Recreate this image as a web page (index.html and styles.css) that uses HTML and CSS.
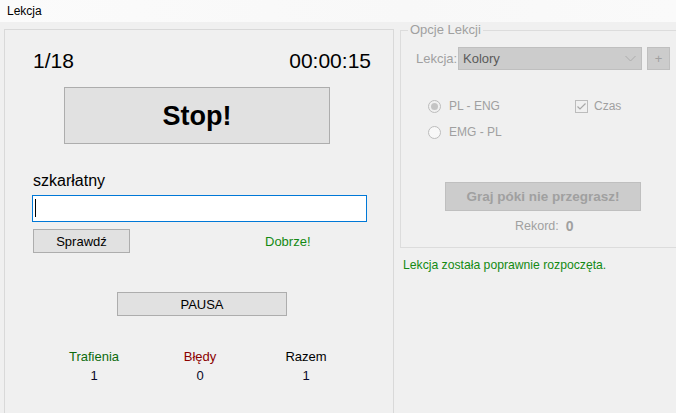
FILE: index.html
```html
<!DOCTYPE html>
<html lang="pl">
<head>
<meta charset="utf-8">
<title>Lekcja</title>
<link rel="stylesheet" href="styles.css">
</head>
<body>
<div class="titlebar">Lekcja</div>
<div class="main">
  <section class="lesson">
    <div class="counter-row"><span>1/18</span><span>00:00:15</span></div>
    <button class="btn stop">Stop!</button>
    <div class="word">szkarłatny</div>
    <div class="answer"><span class="caret"></span></div>
    <div class="check-row">
      <button class="btn check">Sprawdź</button>
      <span class="feedback">Dobrze!</span>
    </div>
    <button class="btn pause">PAUSA</button>
    <div class="stats">
      <span class="label hits">Trafienia</span>
      <span class="label misses">Błędy</span>
      <span class="label total">Razem</span>
      <span class="num">1</span>
      <span class="num">0</span>
      <span class="num">1</span>
    </div>
  </section>
  <aside class="side">
    <fieldset class="options">
      <legend>Opcje Lekcji</legend>
      <div class="lesson-row">
        <span class="field-label">Lekcja:</span>
        <div class="combo">
          <span>Kolory</span>
          <svg class="chevron" width="11" height="7" viewBox="0 0 11 7"><path d="M0.5 1 L5.5 6 L10.5 1" fill="none" stroke="#acacac" stroke-width="1"/></svg>
        </div>
        <div class="plus">+</div>
      </div>
      <div class="radio-row">
        <span class="radio-item">
          <svg width="13" height="13" viewBox="0 0 13 13"><circle cx="6.5" cy="6.5" r="6" fill="#f0f0f0" stroke="#bcbcbc"/><circle cx="6.5" cy="6.5" r="3.5" fill="#c4c4c4"/></svg>
          <span>PL - ENG</span>
        </span>
        <span class="check-item">
          <svg width="13" height="13" viewBox="0 0 13 13"><rect x="0.5" y="0.5" width="12" height="12" fill="#f0f0f0" stroke="#bcbcbc"/><path d="M2.5 6.5 L5 9 L10.5 3.5" fill="none" stroke="#a8a8a8" stroke-width="1.2"/></svg>
          <span>Czas</span>
        </span>
      </div>
      <div class="radio-row second">
        <span class="radio-item">
          <svg width="13" height="13" viewBox="0 0 13 13"><circle cx="6.5" cy="6.5" r="6" fill="#f8f8f8" stroke="#bcbcbc"/></svg>
          <span>EMG - PL</span>
        </span>
      </div>
      <button class="btn disabled play">Graj póki nie przegrasz!</button>
      <div class="record"><span>Rekord:</span><b>0</b></div>
    </fieldset>
    <p class="status">Lekcja została poprawnie rozpoczęta.</p>
  </aside>
</div>
</body>
</html>
```

FILE: styles.css
```css
html, body {
  margin: 0;
  padding: 0;
}
body {
  width: 676px;
  height: 413px;
  overflow: hidden;
  background: #f0f0f0;
  font-family: "Liberation Sans", Arial, sans-serif;
  font-size: 13px;
  color: #000;
}
.titlebar {
  height: 22px;
  box-sizing: border-box;
  padding: 4px 0 0 7px;
  font-size: 12px;
  line-height: 14px;
  background: linear-gradient(to right, #fbfbfb, #f8f8f8 60%, #fafafa);
}
.main {
  display: flex;
  align-items: flex-start;
}
.lesson {
  flex: none;
  margin: 7px 0 0 4px;
  width: 390px;
  height: 400px;
  box-sizing: border-box;
  border: 1px solid #d9d9d9;
  border-bottom: none;
  padding: 19px 22px 0 28px;
  display: flex;
  flex-direction: column;
  align-items: flex-start;
}
.counter-row {
  align-self: stretch;
  display: flex;
  justify-content: space-between;
  font-size: 21px;
  line-height: 24px;
}
.btn {
  font-family: "Liberation Sans", Arial, sans-serif;
  font-size: 13px;
  color: #000;
  background: #e1e1e1;
  border: 1px solid #adadad;
  padding: 0;
  margin: 0;
  box-sizing: border-box;
}
.stop {
  margin: 14px 0 0 31px;
  padding-top: 2px;
  width: 266px;
  height: 57px;
  font-size: 27px;
  font-weight: bold;
}
.word {
  margin-top: 28px;
  font-size: 16px;
  line-height: 18px;
}
.answer {
  margin: 5px 0 0 -1px;
  width: 335px;
  height: 27px;
  box-sizing: border-box;
  border: 1px solid #0078d7;
  background: #fff;
  padding: 3px 0 0 2px;
}
.caret {
  display: block;
  width: 1px;
  height: 18px;
  background: #000;
}
.check-row {
  margin-top: 7px;
  display: flex;
  align-items: center;
}
.check {
  width: 97px;
  height: 24px;
}
.feedback {
  margin-left: 135px;
  color: #138a13;
}
.pause {
  margin: 39px 0 0 84px;
  width: 170px;
  height: 24px;
}
.stats {
  margin: 33px 0 0 8px;
  display: grid;
  grid-template-columns: 106px 106px 106px;
  row-gap: 3px;
  text-align: center;
  line-height: 16px;
}
.hits { color: #0d6b0d; }
.misses { color: #8b0000; }
.total { color: #000; }
.num { color: #0a0a28; }

.side {
  margin-left: 6px;
  width: 300px;
  flex: none;
  font-size: 12.5px;
}
.options {
  margin: 0;
  padding: 0;
  width: 300px;
  height: 226px;
  box-sizing: border-box;
  border: 1px solid #dcdcdc;
  min-width: 0;
  color: #a0a0a0;
}
.options legend {
  margin-left: 7px;
  padding: 0 2px;
  font-size: 13px;
  line-height: 16px;
}
.lesson-row {
  margin: 9px 0 0 15px;
  display: flex;
  align-items: center;
  font-size: 13px;
}
.field-label {
  width: 42px;
}
.combo {
  width: 184px;
  height: 23px;
  box-sizing: border-box;
  background: #cccccc;
  border: 1px solid #bfbfbf;
  display: flex;
  align-items: center;
  justify-content: space-between;
  padding: 0 5px 0 4px;
  color: #5a5a5a;
}
.plus {
  margin-left: 5px;
  width: 23px;
  height: 23px;
  box-sizing: border-box;
  background: #cccccc;
  border: 1px solid #bfbfbf;
  display: flex;
  align-items: center;
  justify-content: center;
  color: #a0a0a0;
}
.radio-row {
  margin: 29px 0 0 27px;
  display: flex;
  align-items: center;
  height: 14px;
  font-size: 12px;
}
.radio-row.second {
  margin-top: 12px;
}
.radio-item, .check-item {
  display: flex;
  align-items: center;
}
.radio-item {
  width: 147px;
}
.radio-item svg {
  margin-right: 8px;
}
.check-item svg {
  margin-right: 6px;
}
.disabled {
  background: #cccccc;
  border-color: #bfbfbf;
  color: #a0a0a0;
}
.play {
  display: block;
  margin: 43px 0 0 44px;
  width: 196px;
  height: 29px;
  font-size: 13.5px;
  font-weight: bold;
}
.record {
  margin: 7px 0 0 114px;
  display: flex;
  gap: 7px;
  line-height: 16px;
  font-size: 12.5px;
}
.record b {
  font-size: 14px;
}
.status {
  margin: 9px 0 0 3px;
  line-height: 16px;
  font-size: 12.2px;
  color: #138a13;
}
```
